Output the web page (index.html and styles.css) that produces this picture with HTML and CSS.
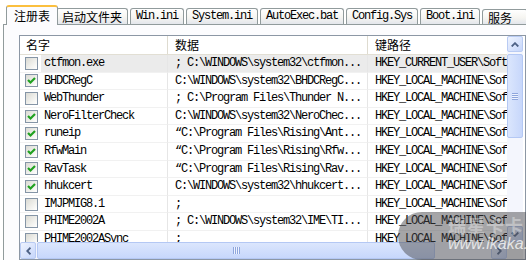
FILE: index.html
```html
<!DOCTYPE html>
<html>
<head>
<meta charset="UTF-8">
<title>启动项管理</title>
<link rel="stylesheet" href="styles.css">
</head>
<body>
<div class="tabs">
	<div class="tab active cn">注册表</div>
	<div class="tab cn">启动文件夹</div>
	<div class="tab">Win.ini</div>
	<div class="tab">System.ini</div>
	<div class="tab">AutoExec.bat</div>
	<div class="tab">Config.Sys</div>
	<div class="tab">Boot.ini</div>
	<div class="tab cn svc">服务</div>
</div>
<div class="panel">
	<div class="list">
		<div class="view">
			<div class="head">
				<div class="hcell c1">名字</div>
				<div class="hcell c2">数据</div>
				<div class="hcell c3">键路径</div>
			</div>
			<div class="row sel">
				<div class="cell c1"><span class="chk"></span><span class="lbl">ctfmon.exe</span></div>
				<div class="cell c2">; C:\WINDOWS\system32\ctfmon...</div>
				<div class="cell c3">HKEY_CURRENT_USER\Soft</div>
			</div>
			<div class="row">
				<div class="cell c1"><span class="chk on"><svg width="11" height="11" viewBox="0 0 11 11"><path d="M2 5 L4.5 7.5 L9 3" stroke="#21a121" stroke-width="2.2" fill="none"/></svg></span><span class="lbl">BHDCRegC</span></div>
				<div class="cell c2">C:\WINDOWS\system32\BHDCRegC...</div>
				<div class="cell c3">HKEY_LOCAL_MACHINE\Sof</div>
			</div>
			<div class="row">
				<div class="cell c1"><span class="chk"></span><span class="lbl">WebThunder</span></div>
				<div class="cell c2">; C:\Program Files\Thunder N...</div>
				<div class="cell c3">HKEY_LOCAL_MACHINE\Sof</div>
			</div>
			<div class="row">
				<div class="cell c1"><span class="chk on"><svg width="11" height="11" viewBox="0 0 11 11"><path d="M2 5 L4.5 7.5 L9 3" stroke="#21a121" stroke-width="2.2" fill="none"/></svg></span><span class="lbl">NeroFilterCheck</span></div>
				<div class="cell c2">C:\WINDOWS\system32\NeroChec...</div>
				<div class="cell c3">HKEY_LOCAL_MACHINE\Sof</div>
			</div>
			<div class="row">
				<div class="cell c1"><span class="chk on"><svg width="11" height="11" viewBox="0 0 11 11"><path d="M2 5 L4.5 7.5 L9 3" stroke="#21a121" stroke-width="2.2" fill="none"/></svg></span><span class="lbl">runeip</span></div>
				<div class="cell c2">“C:\Program Files\Rising\Ant...</div>
				<div class="cell c3">HKEY_LOCAL_MACHINE\Sof</div>
			</div>
			<div class="row">
				<div class="cell c1"><span class="chk on"><svg width="11" height="11" viewBox="0 0 11 11"><path d="M2 5 L4.5 7.5 L9 3" stroke="#21a121" stroke-width="2.2" fill="none"/></svg></span><span class="lbl">RfwMain</span></div>
				<div class="cell c2">“C:\Program Files\Rising\Rfw...</div>
				<div class="cell c3">HKEY_LOCAL_MACHINE\Sof</div>
			</div>
			<div class="row">
				<div class="cell c1"><span class="chk on"><svg width="11" height="11" viewBox="0 0 11 11"><path d="M2 5 L4.5 7.5 L9 3" stroke="#21a121" stroke-width="2.2" fill="none"/></svg></span><span class="lbl">RavTask</span></div>
				<div class="cell c2">“C:\Program Files\Rising\Rav...</div>
				<div class="cell c3">HKEY_LOCAL_MACHINE\Sof</div>
			</div>
			<div class="row">
				<div class="cell c1"><span class="chk on"><svg width="11" height="11" viewBox="0 0 11 11"><path d="M2 5 L4.5 7.5 L9 3" stroke="#21a121" stroke-width="2.2" fill="none"/></svg></span><span class="lbl">hhukcert</span></div>
				<div class="cell c2">C:\WINDOWS\system32\hhukcert...</div>
				<div class="cell c3">HKEY_LOCAL_MACHINE\Sof</div>
			</div>
			<div class="row">
				<div class="cell c1"><span class="chk"></span><span class="lbl">IMJPMIG8.1</span></div>
				<div class="cell c2">;</div>
				<div class="cell c3">HKEY_LOCAL_MACHINE\Sof</div>
			</div>
			<div class="row">
				<div class="cell c1"><span class="chk"></span><span class="lbl">PHIME2002A</span></div>
				<div class="cell c2">; C:\WINDOWS\system32\IME\TI...</div>
				<div class="cell c3">HKEY_LOCAL_MACHINE\Sof</div>
			</div>
			<div class="row">
				<div class="cell c1"><span class="chk"></span><span class="lbl">PHIME2002ASync</span></div>
				<div class="cell c2">;</div>
				<div class="cell c3">HKEY_LOCAL_MACHINE\Sof</div>
			</div>
		</div>
		<div class="vscroll">
			<div class="sbtn"><svg width="8" height="5" viewBox="0 0 8 5"><path d="M0.7 4.5 L4 1.2 L7.3 4.5" stroke="#4d6185" stroke-width="1.8" fill="none"/></svg></div>
			<div class="vthumb"><span class="grip"></span></div>
			<div class="fill"></div>
			<div class="sbtn"><svg width="8" height="5" viewBox="0 0 8 5"><path d="M0.7 0.5 L4 3.8 L7.3 0.5" stroke="#4d6185" stroke-width="1.8" fill="none"/></svg></div>
		</div>
		<div class="hscroll">
			<div class="sbtn"><svg width="5" height="8" viewBox="0 0 5 8"><path d="M4.5 0.7 L1.2 4 L4.5 7.3" stroke="#4d6185" stroke-width="1.8" fill="none"/></svg></div>
			<div class="hthumb"><span class="grip"></span></div>
			<div class="fill"></div>
			<div class="sbtn"><svg width="5" height="8" viewBox="0 0 5 8"><path d="M0.5 0.7 L3.8 4 L0.5 7.3" stroke="#4d6185" stroke-width="1.8" fill="none"/></svg></div>
		</div>
		<div class="corner"></div>
	</div>
</div>
<div class="mark">
	<div class="mark-cn">瑞星卡卡</div>
	<div class="mark-url">www.ikaka.com</div>
</div>
</body>
</html>
```

FILE: styles.css
```css
body{
	margin : 0;
	width : 526px;
	height : 260px;
	overflow : hidden;
	background-color : #ffffff;
	font-family : "Liberation Mono", monospace;
	font-size : 12px;
	color : #000000;
	position : relative;
}

/* tabs */
.tabs{
	display : flex;
	align-items : flex-end;
	height : 24px;
	padding-left : 8px;
	position : relative;
	z-index : 2;
}
.tab{
	flex : none;
	height : 15px;
	line-height : 15px;
	padding : 0 5px;
	margin-right : 2px;
	border : 1px solid #919b9c;
	border-bottom : none;
	border-radius : 3px 3px 0 0;
	background : linear-gradient(#ffffff, #f6f5f1 55%, #e3e6ec);
	letter-spacing : -1.2px;
	white-space : nowrap;
}
.tab.cn{
	font-family : "Noto Sans CJK SC", sans-serif;
	letter-spacing : 0;
}
.tab.active{
	height : 18px;
	line-height : 17px;
	padding : 0 7px;
	margin : 0 -2px -1px -2px;
	border-top : 2px solid #fbbf3e;
	background : #fcfcfe;
	position : relative;
	z-index : 3;
}
.tab.svc{
	box-sizing : border-box;
	min-width : 46px;
}

/* panel */
.panel{
	margin-left : 3px;
	width : 523px;
	height : 236px;
	border : 1px solid #919b9c;
	border-right : none;
	border-bottom : none;
	background-color : #fcfcfe;
	padding : 10px 0 0 15px;
	box-sizing : border-box;
	overflow : hidden;
}

.list{
	width : 505px;
	display : grid;
	grid-template-columns : 487px 16px;
	grid-template-rows : 206px 17px;
	border : 1px solid #8c97a5;
	background-color : #ffffff;
}

.view{
	overflow : hidden;
}

.head{
	display : flex;
	height : 19px;
	border-bottom : 1px solid #e2dfd4;
	box-sizing : border-box;
	font-family : "Noto Sans CJK SC", sans-serif;
	line-height : 18px;
}
.hcell{
	flex : none;
	padding-left : 6px;
	box-sizing : border-box;
	border-right : 1px solid #dedbd0;
}
.hcell.c2, .hcell.c3{
	padding-left : 7px;
}

.row{
	display : flex;
	height : 17.6px;
	line-height : 17px;
	letter-spacing : -1.2px;
	white-space : nowrap;
}
.cell{
	flex : none;
	box-sizing : border-box;
	overflow : hidden;
	border-bottom : 1px solid #f1f1f1;
	border-right : 1px solid #e6e6e6;
}
.c1{
	width : 148px;
}
.c2{
	width : 200px;
}
.c3{
	width : 139px;
	border-right : none;
}
.cell.c1{
	display : flex;
	align-items : center;
	padding-left : 5px;
}
.cell.c2, .cell.c3{
	padding-left : 7px;
}
.lbl{
	margin-left : 3px;
	padding-left : 3px;
	flex : 1;
	height : 100%;
}
.row.sel .lbl, .row.sel .c2, .row.sel .c3{
	background-color : #ebebeb;
}

.chk{
	width : 13px;
	height : 13px;
	box-sizing : border-box;
	border : 1px solid #8595a6;
	background : linear-gradient(135deg, #dadad3, #f5f5f2 70%, #ffffff);
	display : flex;
	align-items : center;
	justify-content : center;
	flex : none;
}

/* scrollbars */
.vscroll, .hscroll{
	display : flex;
	background-color : #f4f6fd;
}
.vscroll{
	flex-direction : column;
}
.sbtn{
	width : 16px;
	height : 16px;
	box-sizing : border-box;
	border : 1px solid #b9cbf3;
	border-radius : 2px;
	background : linear-gradient(135deg, #eef3fe, #c6d6fb);
	display : flex;
	align-items : center;
	justify-content : center;
	flex : none;
}
.hscroll .sbtn{
	height : 17px;
}
.fill{
	flex : 1;
}
.vthumb{
	height : 84px;
	margin-top : 2px;
	box-sizing : border-box;
	border : 1px solid #b4c8f4;
	border-radius : 2px;
	background : linear-gradient(90deg, #dbe6fd, #c7d7fb);
	display : flex;
	align-items : center;
	justify-content : center;
}
.vthumb .grip{
	width : 6px;
	height : 7px;
	background : repeating-linear-gradient(#8ea6dd 0 1px, #eef3fe 1px 2px);
}
.hthumb{
	width : 398px;
	margin-left : 1px;
	box-sizing : border-box;
	border : 1px solid #b4c8f4;
	border-radius : 2px;
	background : linear-gradient(#dbe6fd, #c7d7fb);
	display : flex;
	align-items : center;
	justify-content : center;
}
.hthumb .grip{
	width : 7px;
	height : 7px;
	background : repeating-linear-gradient(90deg, #8ea6dd 0 1px, #eef3fe 1px 2px);
}
.corner{
	background-color : #eeeeee;
}

/* watermark on top of the picture */
.mark{
	position : absolute;
	left : 398px;
	top : 212px;
	width : 128px;
	height : 48px;
	border-radius : 24px 0 0 24px;
	background-color : rgba(75, 75, 80, 0.5);
	z-index : 5;
	font-family : "Liberation Sans", sans-serif;
	overflow : hidden;
}
.mark-cn{
	position : absolute;
	left : 50px;
	top : 0px;
	font-family : "Noto Sans CJK SC", sans-serif;
	font-size : 18px;
	font-weight : bold;
	color : rgba(255, 255, 255, 0.35);
	letter-spacing : 1px;
	white-space : nowrap;
}
.mark-url{
	position : absolute;
	left : 50px;
	top : 23px;
	font-size : 16px;
	font-style : italic;
	color : rgba(255, 255, 255, 0.75);
	white-space : nowrap;
}
```
